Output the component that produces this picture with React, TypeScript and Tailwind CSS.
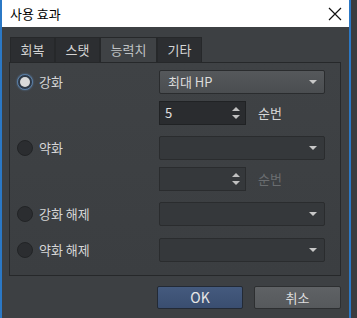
import React from 'react';

const font = { fontFamily: '"Noto Sans CJK KR", "Noto Sans", sans-serif' };

const Radio: React.FC<{ checked?: boolean; label: string }> = ({ checked, label }) => (
  <div className="flex items-center gap-[6px]">
    {checked ? (
      <span className="flex h-[16px] w-[16px] items-center justify-center rounded-full border border-[#5b7fa6] bg-[#2d3846] shadow-[0_0_2px_#5b7fa6]">
        <span className="h-[10px] w-[10px] rounded-full bg-[#d9d9d9]" />
      </span>
    ) : (
      <span className="h-[16px] w-[16px] rounded-full border border-[#222426] bg-[#2b2d30]" />
    )}
    <span className="text-[13px] text-[#d6d6d6]">{label}</span>
  </div>
);

const Combo: React.FC<{ value?: string }> = ({ value }) => (
  <div
    className={
      'flex h-[24px] w-[166px] items-center justify-between rounded-[2px] border pl-[8px] pr-[7px] ' +
      (value
        ? 'border-[#2a2c2e] bg-gradient-to-b from-[#55585b] to-[#4a4d50]'
        : 'border-[#2a2c2e] bg-[#35383b]')
    }
  >
    <span className="text-[13px] text-[#dcdcdc]">{value}</span>
    <span className="h-0 w-0 border-x-[4px] border-t-[4px] border-x-transparent border-t-[#c8c8c8]" />
  </div>
);

const Spin: React.FC<{ value?: string; disabled?: boolean }> = ({ value, disabled }) => (
  <div className="flex items-center gap-[12px]">
    <div
      className={
        'flex h-[24px] w-[87px] items-center justify-between border pl-[5px] pr-[5px] ' +
        (disabled ? 'border-[#2a2c2e] bg-[#35383b]' : 'border-[#202224] bg-[#2a2c2f]')
      }
    >
      <span className="text-[13px] text-[#e0e0e0]">{value}</span>
      <span className="flex flex-col gap-[4px]">
        <span className="h-0 w-0 border-x-[4px] border-b-[4px] border-x-transparent border-b-[#c0c0c0]" />
        <span className="h-0 w-0 border-x-[4px] border-t-[4px] border-x-transparent border-t-[#c0c0c0]" />
      </span>
    </div>
    <span className={'text-[13px] ' + (disabled ? 'text-[#6a6d70]' : 'text-[#d6d6d6]')}>순번</span>
  </div>
);

const Row: React.FC<{ left?: React.ReactNode; children: React.ReactNode; className?: string }> = ({
  left,
  children,
  className,
}) => (
  <div className={'flex h-[24px] items-center ' + (className ?? '')}>
    <div className="w-[149px] pl-[7px]">{left}</div>
    {children}
  </div>
);

const App: React.FC = () => {
  const tabs = ['회복', '스탯', '능력치', '기타'];
  return (
    <div className="flex h-[318px] w-[357px] bg-[#3a3c3f]" style={font}>
      <div className="flex h-[318px] w-[351px] flex-col border-x-2 border-[#2b78c5] bg-[#3d4043]">
        <div className="flex h-[27px] shrink-0 items-center justify-between bg-white pl-[8px] pr-[7px]">
          <span className="text-[13px] text-black">사용 효과</span>
          <svg width="14" height="14" viewBox="0 0 14 14">
            <path d="M1 1L13 13M13 1L1 13" stroke="#111" strokeWidth="1.2" />
          </svg>
        </div>
        <div className="flex flex-col pl-[7px] pt-[10px]">
          <div className="flex h-[25px]">
            {tabs.map((t, i) => (
              <div
                key={t}
                className={
                  'flex items-center justify-center border border-b-0 border-[#26282a] text-[13px] ' +
                  (i === 2
                    ? 'w-[57px] bg-[#3f4245] text-[#bfc2c4]'
                    : 'w-[45px] bg-[#2c2e31] text-[#d4d4d4]') +
                  (i === 0 ? ' ml-[1px]' : '')
                }
              >
                {t}
              </div>
            ))}
          </div>
          <div className="flex h-[214px] w-[332px] flex-col border border-[#26282a] bg-gradient-to-b from-[#3f4245] to-[#3b3e41] pt-[7px]">
            <Row left={<Radio checked label="강화" />}>
              <Combo value="최대 HP" />
            </Row>
            <Row className="mt-[7px]">
              <Spin value="5" />
            </Row>
            <Row className="mt-[11px]" left={<Radio label="약화" />}>
              <Combo />
            </Row>
            <Row className="mt-[7px]">
              <Spin disabled />
            </Row>
            <Row className="mt-[11px]" left={<Radio label="강화 해제" />}>
              <Combo />
            </Row>
            <Row className="mt-[12px]" left={<Radio label="약화 해제" />}>
              <Combo />
            </Row>
          </div>
          <div className="mt-[10px] flex w-[332px] justify-end gap-[11px]">
            <button className="h-[23px] w-[86px] rounded-[2px] border border-[#232a35] bg-gradient-to-b from-[#445a7e] to-[#3a4e70] text-[14px] text-[#e6e6e6]">
              OK
            </button>
            <button className="h-[23px] w-[87px] rounded-[2px] border border-[#2d2f31] bg-gradient-to-b from-[#5f6265] to-[#56595c] text-[13px] text-[#dedede]">
              취소
            </button>
          </div>
        </div>
      </div>
    </div>
  );
};

export default App;
